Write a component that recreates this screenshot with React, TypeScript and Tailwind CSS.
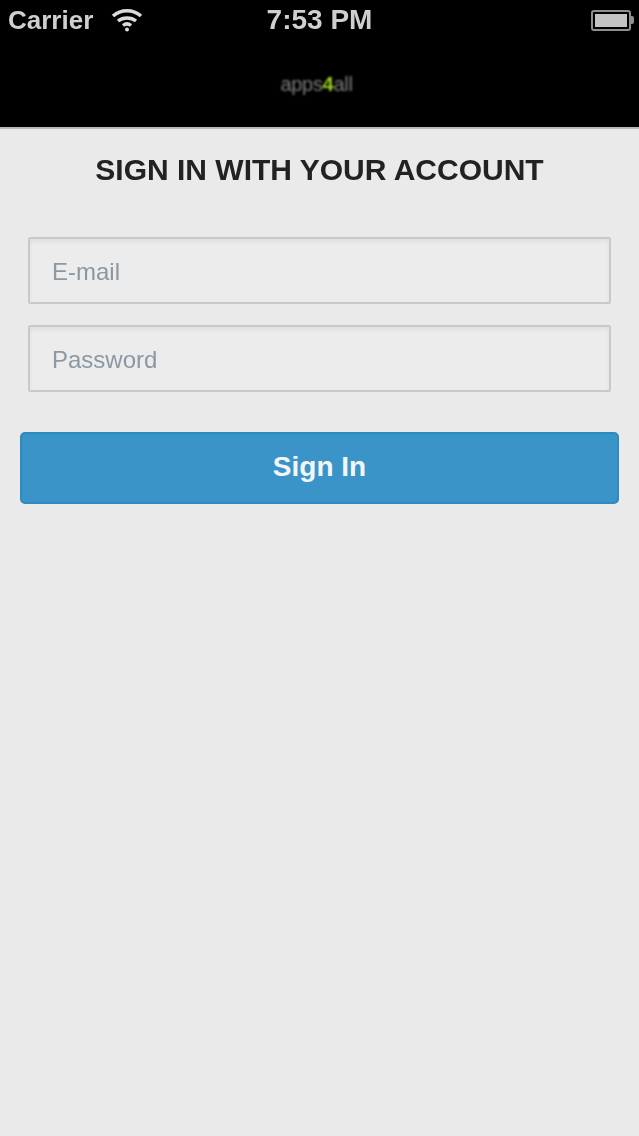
import React from 'react'

const sans = { fontFamily: '"Liberation Sans", Arial, sans-serif' }

function StatusBar() {
  return (
    <div className="flex h-[40px] items-center justify-between pl-2 pr-[5px] font-bold text-[#cfcfcf] blur-[0.7px]">
      <div className="flex flex-1 items-center gap-[18px]">
        <span className="text-[26px] leading-none">Carrier</span>
        <svg width="32" height="24" viewBox="0 0 32 24" fill="none" stroke="#dcdcdc" strokeWidth="3.5">
          <path d="M2 8C10 1 22 1 30 8" />
          <path d="M7 13C12 9 20 9 25 13" />
          <path d="M12 17.500C14.500 15.500 17.500 15.500 20 17.500" />
          <circle cx="16" cy="21.500" r="2" fill="#dcdcdc" stroke="none" />
        </svg>
      </div>
      <span className="mr-[3px] text-[28px] leading-none">7:53 PM</span>
      <div className="flex flex-1 justify-end">
        <div className="flex items-center">
          <div className="h-[21px] w-[40px] rounded-[3px] border-2 border-[#8f8f8f] p-[2px]">
            <div className="h-full w-full bg-[#c4c4c4]" />
          </div>
          <div className="h-[8px] w-[3px] rounded-r-[2px] bg-[#8f8f8f]" />
        </div>
      </div>
    </div>
  )
}

function Logo() {
  return (
    <div className="flex h-[87px] items-start justify-center pt-[32px] pr-[6px]">
      <div className="flex items-baseline text-[20px] leading-[24px] tracking-[-0.3px] text-[#7d7d7d] blur-[0.8px]">
        <span>apps</span>
        <span className="font-bold text-[#9fd21f]">4</span>
        <span>all</span>
      </div>
    </div>
  )
}

function Field({ placeholder, type }: { placeholder: string; type: string }) {
  return (
    <input
      type={type}
      placeholder={placeholder}
      className="block h-[67px] w-full rounded-[2px] border-2 border-[#c9c9c9] bg-[#ececec] px-[22px] pt-[2px] text-[24px] text-[#333] shadow-[inset_0_3px_4px_rgba(0,0,0,0.05)] outline-none placeholder:text-[#8b98a3]"
    />
  )
}

export default function App() {
  return (
    <div className="flex min-h-[1136px] flex-col bg-[#eaeaea]" style={sans}>
      <header className="h-[127px] bg-black">
        <StatusBar />
        <Logo />
      </header>
      <div className="h-[2px] bg-[#b9b9b9]" />
      <main className="flex flex-col blur-[0.4px]">
        <h1 className="mt-[23px] text-center text-[30px] leading-[36px] font-bold text-[#222]">
          SIGN IN WITH YOUR ACCOUNT
        </h1>
        <form className="mt-[49px] flex flex-col gap-[21px] px-[28px]">
          <Field type="email" placeholder="E-mail" />
          <Field type="password" placeholder="Password" />
        </form>
        <div className="mt-[40px] px-[20px]">
          <button
            type="button"
            className="h-[72px] w-full rounded-[5px] border-2 border-[#2a8cc2] bg-[#3a94c8] pb-[3px] text-[28px] font-bold text-[#f2f6f9]"
          >
            Sign In
          </button>
        </div>
      </main>
    </div>
  )
}
